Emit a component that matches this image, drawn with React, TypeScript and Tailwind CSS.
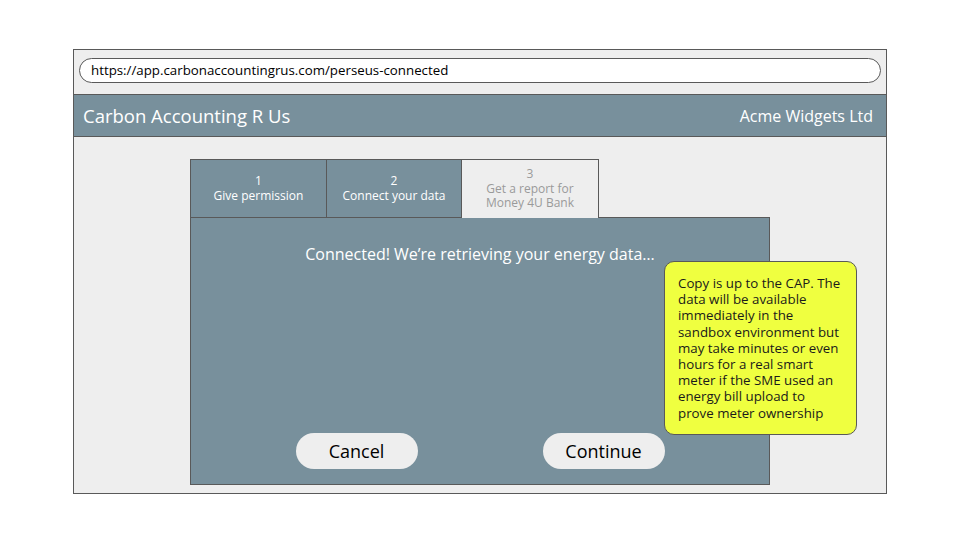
export default function App() {
  return (
    <div className="w-[960px] h-[540px] bg-white pt-[49px] pl-[73px] font-['Open_Sans',sans-serif]">
      <div className="relative w-[814px] h-[445px] border border-[#595959] bg-[#eeeeee] flex flex-col">
        {/* address bar */}
        <div className="h-[44px] px-[5px] pt-[8px]">
          <div className="h-[25px] rounded-full border border-[#595959] bg-white pl-[11px] flex items-center text-[13.3px] text-black">
            https://app.carbonaccountingrus.com/perseus-connected
          </div>
        </div>

        {/* site header */}
        <div className="h-[43px] bg-[#78909c] border-y border-[#595959] flex items-center justify-between pl-[9px] pr-[13px] text-white">
          <span className="text-[18.5px]">Carbon Accounting R Us</span>
          <span className="text-[16px]">Acme Widgets Ltd</span>
        </div>

        {/* content */}
        <div className="flex-1 pl-[116px] pt-[22px]">
          <div className="flex text-[12px] leading-[14.5px] text-center">
            <div className="w-[137px] h-[59px] bg-[#78909c] border border-[#595959] text-white flex flex-col items-center justify-center">
              <span>1</span>
              <span>Give permission</span>
            </div>
            <div className="w-[135px] h-[59px] bg-[#78909c] border border-l-0 border-[#595959] text-white flex flex-col items-center justify-center">
              <span>2</span>
              <span>Connect your data</span>
            </div>
            <div className="w-[137px] h-[59px] bg-[#eeeeee] border border-l-0 border-b-0 border-[#595959] text-[#9a9a9a] flex flex-col items-center justify-center">
              <span>3</span>
              <span>Get a report for</span>
              <span>Money 4U Bank</span>
            </div>
          </div>
          <div className="w-[580px] h-[268px] -mt-px bg-[#78909c] border border-[#595959] flex flex-col items-center pt-[24px] pb-[15px]">
            <p className="text-[16px] text-white">Connected! We’re retrieving your energy data…</p>
            <div className="mt-auto flex gap-[125px]">
              <button className="w-[122px] h-[36px] rounded-full bg-[#eeeeee] text-[18px] text-black">Cancel</button>
              <button className="w-[122px] h-[36px] rounded-full bg-[#eeeeee] text-[18px] text-black">Continue</button>
            </div>
          </div>
        </div>

        {/* sticky note */}
        <div className="absolute left-[590px] top-[211px] w-[193px] h-[174px] rounded-[10px] border border-[#595959] bg-[#efff40] pl-[13px] pt-[13px] text-[13.3px] leading-[16.2px] text-[#1a1a1a]">
          Copy is up to the CAP. The<br />
          data will be available<br />
          immediately in the<br />
          sandbox environment but<br />
          may take minutes or even<br />
          hours for a real smart<br />
          meter if the SME used an<br />
          energy bill upload to<br />
          prove meter ownership
        </div>
      </div>
    </div>
  );
}
